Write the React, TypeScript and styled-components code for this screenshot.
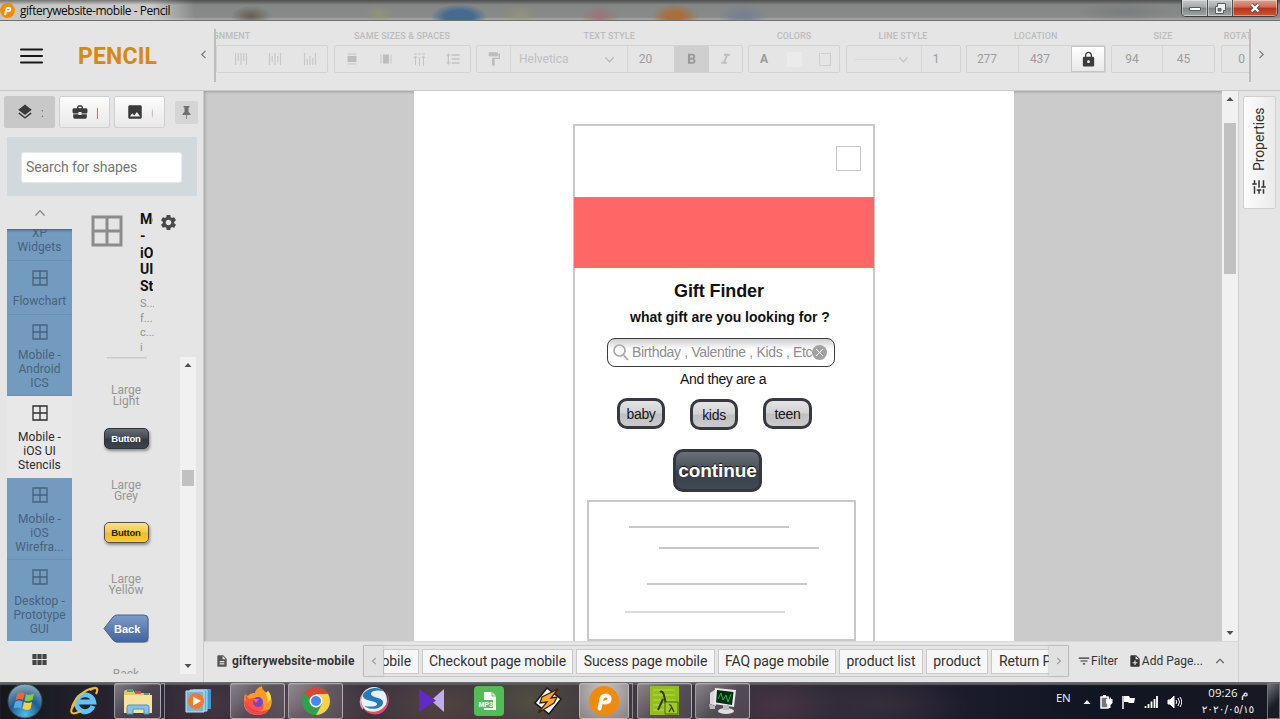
import React from "react";
import styled, { createGlobalStyle, css } from "styled-components";
import {
  MdLayers, MdBusinessCenter, MdImage, MdSettings, MdLock, MdFormatPaint, MdFormatBold,
  MdFormatItalic, MdTune, MdFilterList, MdNoteAdd, MdDescription, MdViewModule, MdFormatLineSpacing,
} from "react-icons/md";

const Global = createGlobalStyle`
  * { box-sizing: border-box; }
  body { margin: 0; overflow: hidden; font-family: Roboto, "Liberation Sans", sans-serif; background: #e5e5e5; }
  svg { display: block; flex: none; }
`;

const Screen = styled.div`
  width: 1280px; height: 719px; display: flex; flex-direction: column; overflow: hidden;
`;

/* Window title bar */
const TitleBar = styled.div`
  height: 21px; flex: none; display: flex; justify-content: space-between; overflow: hidden;
  border-bottom: 1px solid #6d7271;
  background:
    linear-gradient(rgba(60,60,60,.6) 0, transparent 5px),
    linear-gradient(90deg, rgba(205,205,202,.9) 0, rgba(212,212,209,.9) 150px, transparent 195px),
    radial-gradient(ellipse 20px 10px at 251px 16px, rgba(95,84,72,.75) 10%, transparent 100%),
    radial-gradient(ellipse 16px 10px at 379px 14px, rgba(160,155,105,.5) 0%, transparent 100%),
    radial-gradient(ellipse 28px 13px at 459px 17px, rgba(66,104,144,.95) 50%, transparent 100%),
    radial-gradient(ellipse 18px 12px at 520px 15px, rgba(160,155,110,.5) 0%, transparent 100%),
    radial-gradient(ellipse 19px 13px at 600px 17px, rgba(165,108,112,.75) 10%, transparent 100%),
    radial-gradient(ellipse 24px 13px at 675px 17px, rgba(175,105,48,.9) 30%, transparent 100%),
    radial-gradient(ellipse 24px 15px at 743px 18px, rgba(112,124,147,.7) 30%, transparent 100%),
    radial-gradient(ellipse 50px 10px at 1125px 12px, rgba(105,108,108,.4) 0%, transparent 100%),
    linear-gradient(#6c6f6f 0, #838786 4px, #868a89 17px, #a0a4a3 19px);
`;
const Caption = styled.div`
  display: flex; align-items: center; gap: 5px; height: 20px;
  font: 12px "Open Sans", "Noto Sans", sans-serif; color: #0b0b0b; white-space: nowrap; letter-spacing: -0.47px;
`;
const WindowButtons = styled.div`
  display: flex; width: 97px; height: 17px; margin-right: 2px;
  border: 1px solid #3b3f41; border-top: 0; border-radius: 0 0 5px 5px; overflow: hidden;
`;
const WindowButton = styled.div<{ $w: number; $close?: boolean }>`
  width: ${p => p.$w}px; display: grid; place-items: center; border-right: 1px solid #4c5051;
  box-shadow: inset 0 0 0 1px rgba(255,255,255,.4);
  background: ${p => p.$close
    ? "linear-gradient(#dda092 0, #cc6a56 45%, #b83218 50%, #d1532f 100%)"
    : "linear-gradient(#c6c9c9 0, #a5a9a9 45%, #7f8484 50%, #a0a5a5 100%)"};
  &:last-child { border-right: 0; }
`;

/* Header with style toolbar */
const Header = styled.div`
  height: 70px; flex: none; display: flex; background: #e5e5e5; border-bottom: 1px solid #c9c9c9;
`;
const Brand = styled.div`
  width: 214px; flex: none; display: flex; align-items: center; padding: 0 6px 0 20px;
`;
const BrandName = styled.div`
  margin-left: 35px; font-weight: 700; font-size: 23px; color: #d8890f; line-height: 28px; width: 85px; letter-spacing: .15px;
  margin-top: 3px;
`;
const ToolStrip = styled.div`
  width: 1037px; height: 53px; margin-top: 8px; flex: none; overflow: hidden; display: flex; gap: 5.5px; padding-top: 2px;
  border-left: 2px solid #bdbdbd; border-right: 2px solid #bdbdbd;
`;
const Group = styled.div<{ $w: number }>`
  width: ${p => p.$w}px; flex: none;
`;
const GroupLabel = styled.div<{ $shift?: number }>`
  height: 14px; line-height: 10px; font-size: 9px; letter-spacing: .12px; font-weight: 500; color: #bcbcbc; text-align: center; white-space: nowrap;
  transform: translateX(${p => p.$shift ?? 0}px);
`;
const GroupBox = styled.div<{ $end?: boolean }>`
  height: 28px; display: flex; border: 1px solid #d3d3d3; border-radius: 2px;
  justify-content: ${p => (p.$end ? "flex-end" : "flex-start")}; overflow: hidden;
`;
const Cell = styled.div<{ $w: number; $line?: boolean; $active?: boolean; $raised?: boolean; $color?: string; $pull?: number }>`
  width: ${p => p.$w}px; flex: none; display: flex; align-items: center; justify-content: center; padding-right: ${p => p.$pull ?? 0}px;
  font-size: 12px; letter-spacing: 0; color: ${p => p.$color ?? "#9c9c9c"};
  ${p => p.$line && css`border-right: 1px solid #d6d6d6;`}
  ${p => p.$active && css`background: #cfcfcf;`}
  ${p => p.$raised && css`background: linear-gradient(#fff, #e8e8e8); border: 1px solid #c4c4c4;`}
`;
const FontPick = styled(Cell)` justify-content: space-between; padding: 0 13px 0 8px; font-size: 12px; `;
const Swatch = styled.i<{ $hollow?: boolean }>`
  width: ${p => (p.$hollow ? 12 : 15)}px; height: ${p => (p.$hollow ? 13 : 15)}px;
  ${p => (p.$hollow ? css`border: 1px solid #cfcfcf;` : css`background: #ebebeb;`)}
`;
const StrokeSample = styled.i` width: 42px; height: 1px; background: #d8d8d8; `;
const NextArrow = styled.div` flex: 1; display: grid; place-items: center; padding: 0 9px 2px 0; `;
const PrevArrow = styled.div` margin-left: auto; padding-bottom: 2px; `;

/* Work area */
const Work = styled.div` height: 591px; flex: none; display: flex; background: #e5e5e5; `;
const Side = styled.div`
  width: 204px; flex: none; border-right: 1px solid #cbcbcb; display: flex; flex-direction: column; overflow: hidden;
`;
const SideTabs = styled.div` display: flex; padding: 5px 0 0 4px; height: 46px; gap: 4px; `;
const SideTab = styled.div<{ $active?: boolean }>`
  width: 51px; height: 32px; display: flex; align-items: center; gap: 7px; padding-left: 11px; overflow: hidden; border-radius: 2px;
  background: ${p => (p.$active ? "#c8c8c8" : "linear-gradient(#fcfcfc, #e9e9e9)")};
  border: 1px solid ${p => (p.$active ? "#c8c8c8" : "#cfcfcf")}; color: #3a3a3a;
  font-size: 13px;
`;
const TabText = styled.span<{ $w: number; $faint?: boolean }>`
  width: ${p => p.$w}px; overflow: hidden; white-space: nowrap; color: ${p => (p.$faint ? "#bbb" : "#666")};
`;
const Pin = styled.div`
  width: 23px; height: 23px; margin: 5px 0 0 6px; background: #d5d5d5; border-radius: 2px; display: grid; place-items: center; padding: 0 1px 1px 0;
`;
const SearchPane = styled.div` width: 190px; height: 59px; margin-left: 7px; background: #d1d9dc; padding: 15px 14px; flex: none; `;
const SearchInput = styled.div`
  height: 31px; width: 161px; background: #fff; border-radius: 3px; padding-left: 4px; line-height: 28px; font-size: 14px; color: #757575;
  letter-spacing: -.08px; border: 1px solid #e6e9ea;
`;
const Library = styled.div` flex: 1; display: flex; padding: 9px 0 0 7px; min-height: 0; `;
const Collections = styled.div` width: 65px; flex: none; display: flex; flex-direction: column; `;
const CaretRow = styled.div` height: 24px; display: grid; place-items: center; padding-bottom: 8px; `;
const ScrollingItems = styled.div`
  height: 412px; display: flex; flex-direction: column; justify-content: flex-end; overflow: hidden; flex: none;
  box-shadow: inset 0 3px 3px -2px rgba(0,0,0,.45);
  background: #739bc0;
`;
const Collection = styled.div<{ $h: number; $active?: boolean; $lead?: number }>`
  height: ${p => p.$h}px; flex: none; display: flex; flex-direction: column; align-items: center; padding-top: ${p => p.$lead ?? 9}px;
  color: ${p => (p.$active ? "#2c2c2c" : "#48627a")};
  background: ${p => (p.$active ? "#e8e8e8" : "transparent")};
  border-bottom: 1px solid ${p => (p.$active ? "transparent" : "#6890b5")};
  &:last-child { border: 0; }
`;
const CollectionName = styled.div<{ $top?: number }>`
  margin-top: ${p => p.$top ?? 8}px; font-size: 12px; line-height: 14px; text-align: center; letter-spacing: .05px; white-space: pre;
`;
const GridRow = styled.div` height: 36px; display: grid; place-items: center; color: #444; `;
const Shapes = styled.div` width: 125px; display: flex; flex-direction: column; `;
const ShapesHead = styled.div` height: 152px; flex: none; display: flex; align-items: flex-start; padding: 4px 0 0 18px; `;
const ShapesIcon = styled.div` color: #8c8c8c; padding-top: 6px; margin-left: 1px; `;
const ShapesInfo = styled.div` width: 14px; margin: 0 5px 0 17px; overflow: hidden; white-space: pre; `;
const ShapesTitle = styled.div` font-weight: 700; font-size: 14px; line-height: 16.8px; color: #111; margin-top: 2px; width: 13px; overflow: hidden; `;
const ShapesNote = styled.div` font-size: 11px; line-height: 14.7px; color: #909090; margin-top: 2px; `;
const Gear = styled.div` margin-top: 4px; color: #484848; `;
const ShapesBody = styled.div` display: flex; height: 317px; overflow: hidden; `;
const ShapeList = styled.div` width: 108px; flex: none; display: flex; flex-direction: column; align-items: center; overflow: hidden; `;
const CutEdge = styled.div` width: 40px; height: 2px; background: linear-gradient(#c4c4c4, #e0e0e0); margin: 0 0 26px 2px; flex: none; `;
const ShapeName = styled.div`
  font-size: 12px; line-height: 11px; height: 24px; text-align: center; color: #969696; white-space: pre; letter-spacing: 0; flex: none;
`;
const MiniSlot = styled.div` height: 70.6px; flex: none; display: flex; align-items: center; justify-content: center; padding-bottom: 12px; `;
const MiniButton = styled.div<{ $yellow?: boolean }>`
  width: 45px; height: 21px; border-radius: 5px; display: grid; place-items: center;
  font: bold 9.5px "Liberation Sans", Arial, sans-serif; letter-spacing: -.2px; box-shadow: 1px 2px 3px rgba(0,0,0,.4);
  ${p => (p.$yellow
    ? css`border: 1.5px solid #55524c; color: #2a2206; background: linear-gradient(#f9e08a, #f5cb45 48%, #efbc23 52%, #f5cc40);`
    : css`border: 1.5px solid #2e343c; color: #fff; background: linear-gradient(#666c74, #434a54 48%, #323943 52%, #3d444e);`)}
`;

const ScrollTrack = styled.div`
  width: 16px; flex: none; background: #f1f1f1; display: flex; flex-direction: column; align-items: center; padding: 5px 0;
`;
const Thumb = styled.div<{ $top: number; $h: number }>`
  width: 12px; height: ${p => p.$h}px; margin-top: ${p => p.$top}px; margin-bottom: auto; background: #c1c1c1; flex: none;
`;

const Center = styled.div` width: 1034px; flex: none; display: flex; flex-direction: column; `;
const CanvasRow = styled.div` height: 550px; display: flex; `;
const Canvas = styled.div`
  width: 1018px; background: #cbcbcb; overflow: hidden; display: flex; padding-left: 210px;
  box-shadow: inset 2px 2px 3px -1px rgba(0,0,0,.22);
`;
const Page = styled.div` width: 600px; height: 550px; background: #fff; position: relative; overflow: hidden; `;

/* Shapes placed on the drawing page */
type Box = { $x: number; $y: number; $w: number; $h: number };
const Shape = styled.div<Box>`
  position: absolute; left: ${p => p.$x}px; top: ${p => p.$y}px; width: ${p => p.$w}px; height: ${p => p.$h}px;
`;
const Outline = styled(Shape)<{ $thin?: boolean }>` border: ${p => (p.$thin ? 1 : 2)}px solid #c8c8c8; `;
const Banner = styled(Shape)` background: #ff6767; border: 1px solid #e07a7a; border-width: 1px 0; `;
const Rule = styled(Shape)<{ $light?: boolean }>` background: ${p => (p.$light ? "#dcdcdc" : "#c8c8c8")}; `;
const PageText = styled(Shape)<{ $size: number; $bold?: boolean; $gap?: number }>`
  font: ${p => (p.$bold ? "bold" : "normal")} ${p => p.$size}px/${p => p.$h}px "Liberation Sans", Arial, sans-serif;
  letter-spacing: ${p => p.$gap ?? 0}px; color: #111; white-space: nowrap;
`;
const SearchField = styled(Shape)`
  border: 1px solid #3c3c3c; border-radius: 8px; display: flex; align-items: center; padding: 0 6px 1px 5px;
  background: linear-gradient(#cfcfd1, #fff 40%); color: #8d8d8d; font: 14px "Liberation Sans", Arial, sans-serif; letter-spacing: -.33px;
`;
const FieldText = styled.span` width: 188px; margin: 0 -8px 0 3px; white-space: nowrap; `;
const Pill = styled(Shape)`
  border: 3px solid #38393f; border-radius: 10px; display: grid; place-items: center; color: #151515;
  font: 14px "Liberation Sans", Arial, sans-serif; letter-spacing: -.3px; padding-top: 1px;
  background: linear-gradient(#e4e4e6, #d2d2d5 48%, #c0c0c4 52%, #cbcbce);
`;
const BigButton = styled(Shape)`
  border: 3px solid #34373d; border-radius: 10px; display: grid; place-items: center; color: #fff;
  font: bold 19px "Liberation Sans", Arial, sans-serif; text-shadow: 0 -1px 1px #111; letter-spacing: -.1px;
  background: linear-gradient(#6a6f77, #4a5059 48%, #363e48 52%, #414954);
`;

/* Bottom page bar */
const PageBar = styled.div` height: 41px; display: flex; align-items: center; border-top: 1px solid #d8d8d8; background: #e5e5e5; padding-bottom: 2px; `;
const DocName = styled.div`
  width: 159px; flex: none; display: flex; align-items: center; gap: 3px; padding-left: 11px; font-weight: 700; font-size: 12px; color: #333;
  letter-spacing: .18px; white-space: nowrap;
`;
const PageTabs = styled.div` width: 706px; height: 32px; flex: none; display: flex; border: 1px solid #c6c6c6; `;
const TabArrow = styled.div` width: 19px; flex: none; display: grid; place-items: center; background: #e1e1e1; box-shadow: 0 0 2px #aaa; z-index: 1; `;
const TabClip = styled.div` flex: 1; overflow: hidden; display: flex; gap: 3px; padding: 3px 0; background: #e5e5e5; `;
const PageTab = styled.div<{ $w: number; $cut?: boolean; $open?: boolean }>`
  width: ${p => p.$w}px; flex: none; height: 25px; border: 1px solid #c9c9c9; background: #f7f7f7; font-size: 14px; color: #333;
  display: flex; align-items: center; overflow: hidden; white-space: nowrap; letter-spacing: -.1px;
  justify-content: ${p => (p.$cut ? "flex-end" : p.$open ? "flex-start" : "center")};
  padding: 0 7px 1px;
`;
const BarAction = styled.div<{ $left: number; $gap: number }>`
  display: flex; align-items: center; gap: ${p => p.$gap}px; margin-left: ${p => p.$left}px; font-size: 12px; color: #333; white-space: nowrap;
`;

const Right = styled.div` width: 42px; border-left: 1px solid #d0d0d0; padding: 5px 0 0 4px; `;
const PropertiesTab = styled.div`
  width: 33px; height: 113px; border: 1px solid #d0d0d0; border-radius: 2px;
  writing-mode: vertical-rl; transform: rotate(180deg); display: flex; align-items: center; gap: 7px; padding: 12px 0 0 1px;
  font-size: 14px; letter-spacing: -.1px; color: #333; background: linear-gradient(270deg, #fdfdfd, #eaeaea);
`;
const TurnedTune = styled(MdTune)` transform: rotate(90deg); `;

/* Taskbar */
const Taskbar = styled.div`
  height: 37px; flex: none; display: flex; border-top: 1px solid #6c6d70; overflow: hidden;
  box-shadow: inset 0 2px 1px #5b5c60;
  background:
    radial-gradient(ellipse 60px 40px at 310px 20px, rgba(99,82,88,.8), transparent),
    radial-gradient(ellipse 70px 34px at 440px 22px, rgba(82,68,64,.9), transparent),
    radial-gradient(ellipse 60px 40px at 530px 18px, rgba(82,80,66,.9), transparent),
    radial-gradient(ellipse 60px 30px at 780px 22px, rgba(72,54,66,.9), transparent),
    radial-gradient(ellipse 90px 30px at 880px 22px, rgba(58,48,62,.8), transparent),
    radial-gradient(ellipse 60px 40px at 210px 20px, rgba(70,56,68,.8), transparent),
    linear-gradient(90deg, #15171d 0, #282431 120px, #3c3340 300px, #423b40 600px, #302b3a 800px, #1b1b2c 960px, #101522 1100px, #171922 1280px);
`;
const Task = styled.div<{ $w: number; $left?: number; $open?: boolean; $active?: boolean }>`
  width: ${p => p.$w}px; margin-left: ${p => p.$left ?? 0}px; height: 36px; flex: none; display: grid; place-items: center; padding-bottom: 1px;
  ${p => p.$open && css`
    border: 1px solid rgba(205,205,205,.65); border-radius: 3px;
    background: linear-gradient(135deg, rgba(215,210,215,.5), rgba(170,160,170,.25) 50%, rgba(120,110,120,.3));
  `}
  ${p => p.$active && css`background: radial-gradient(circle at 50% 20%, rgba(225,220,218,.85), rgba(160,155,155,.75));`}
`;
const StackEdge = styled.div`
  width: 4px; height: 36px; flex: none; border: solid rgba(190,190,190,.6); border-width: 1px 1px 1px 0;
`;
const Tray = styled.div`
  margin-left: auto; display: flex; align-items: center; color: #f2f2f2; font: 12px "Open Sans", "Noto Sans", sans-serif; height: 36px;
`;
const Lang = styled.div` width: 27px; font-size: 11.5px; letter-spacing: -.4px; margin-top: -7px; `;
const TrayIcons = styled.div` display: flex; align-items: center; width: 99px; justify-content: space-between; padding-top: 1px; `;
const Clock = styled.div` width: 60px; margin-left: 16px; text-align: center; line-height: 16px; font-size: 11.5px; letter-spacing: -.75px; `;
const ClockDate = styled.div` font: 10.6px/16px "DejaVu Sans", "Noto Sans", sans-serif; letter-spacing: 0; white-space: nowrap; direction: ltr; unicode-bidi: bidi-override; `;
const PeekButton = styled.div`
  width: 13px; height: 36px; margin-left: 9px; border: 1px solid #71757c; background: linear-gradient(135deg, #72767c, #1a1d24 60%);
`;

const Quad = ({ s, w = 1.6 }: { s: number; w?: number }) => (
  <svg width={s} height={s} viewBox="0 0 16 16" fill="none" stroke="currentColor" strokeWidth={w}>
    <path d="M1 1h14v14H1zM8 1v14M1 8h14" />
  </svg>
);
const Chevron = ({ d, c = "#777", s = 8 }: { d: "l" | "r" | "u" | "d"; c?: string; s?: number }) => (
  <svg width={s} height={s} viewBox="0 0 8 8" fill="none" stroke={c} strokeWidth="1.1">
    <path d={{ l: "M5.8 .8 2.5 4l3.3 3.2", r: "M2.2 .8 5.5 4 2.2 7.2", u: "M.3 6 4 2.2 7.7 6", d: "M.3 2.2 4 6l3.7-3.8" }[d]} />
  </svg>
);
const Triangle = ({ down, c = "#505050" }: { down?: boolean; c?: string }) => (
  <svg width="8" height="6" viewBox="0 0 8 6"><path fill={c} d={down ? "M.5 1h7L4 5z" : "M.5 5h7L4 1z"} /></svg>
);
const VBars = ({ mode }: { mode: number }) => (
  <svg width="14" height="14" viewBox="0 0 14 14" stroke="#c8c8c8" strokeWidth="1.2">
    {[0, 1, 2, 3, 4].map(i => {
      const tall = i === 0 || i === 4 || i === 2;
      const y1 = mode === 0 ? 1 : mode === 1 ? (i % 2 ? 4 : 1) : [1, 7, 4, 6, 1][i];
      const y2 = mode === 0 ? (tall ? 13 : 9) : mode === 1 ? (i % 2 ? 10 : 13) : 13;
      return <path key={i} d={`M${1.5 + i * 2.75} ${y1}V${y2}`} />;
    })}
  </svg>
);
const SizeBars = ({ turn }: { turn?: boolean }) => (
  <svg width="12" height="12" viewBox="0 0 12 12">
    <g transform={turn ? "rotate(90 6 6)" : undefined}>
      <path d="M1.500 1h9M1.500 11h9" stroke="#c4c4c4" /><path d="M1.500 3h9v6h-9z" fill="#bdbdbd" />
    </g>
  </svg>
);
const PencilLogo = ({ s }: { s: number }) => (
  <svg width={s} height={s} viewBox="0 0 30 30">
    <circle cx="15" cy="15" r="15" fill="#ef8b09" />
    <path d="M10.500 22.500 12 16c0-3 1-6.500 5-6.500 5 0 5 7-1.500 7" fill="none" stroke="#fff" strokeWidth="4" strokeLinecap="round" strokeLinejoin="round" />
  </svg>
);

const PAGES: { n: string; w: number; cut?: boolean; open?: boolean }[] = [
  { n: "obile", w: 36, cut: true }, { n: "Checkout page mobile", w: 151 }, { n: "Sucess page mobile", w: 139 },
  { n: "FAQ page mobile", w: 118 }, { n: "product list", w: 84 }, { n: "product", w: 62 }, { n: "Return Policy", w: 100, open: true },
];
const COLLECTIONS = [
  { n: "Flowchart", h: 54 }, { n: "Mobile -\nAndroid\nICS", h: 81 }, { n: "Mobile -\niOS UI\nStencils", h: 82, on: true, top: 9 },
  { n: "Mobile -\niOS\nWirefra...", h: 82, top: 9 }, { n: "Desktop -\nPrototype\nGUI", h: 81, top: 9 },
];

const StyleToolbar = () => (
  <ToolStrip>
    <Group $w={112}>
      <GroupLabel $shift={-47.5}>ALIGNMENT</GroupLabel>
      <GroupBox $end>{[0, 1, 2].map(m => <Cell key={m} $w={34.5}><VBars mode={m} /></Cell>)}</GroupBox>
    </Group>
    <Group $w={137}>
      <GroupLabel>SAME SIZES &amp; SPACES</GroupLabel>
      <GroupBox>
        <Cell $w={34}><SizeBars /></Cell>
        <Cell $w={34}><SizeBars turn /></Cell>
        <Cell $w={34}>
          <svg width="13" height="15" viewBox="0 0 13 15" stroke="#c4c4c4" fill="none"><path d="M1 2h3M5 2h3M9 2h3M2.500 5v8M6.500 5v9M10.500 5v9M1 6l1.500-2L4 6M9 6l1.500-2L12 6" /></svg>
        </Cell>
        <Cell $w={33} $color="#c2c2c2"><MdFormatLineSpacing size={16} /></Cell>
      </GroupBox>
    </Group>
    <Group $w={266.5}>
      <GroupLabel>TEXT STYLE</GroupLabel>
      <GroupBox>
        <Cell $w={34} $line $color="#bdbdbd"><MdFormatPaint size={16} /></Cell>
        <FontPick $w={116.500} $line $color="#c0c0c0">Helvetica<Chevron d="d" c="#b8b8b8" s={9} /></FontPick>
        <Cell $w={46} $pull={10}>20</Cell>
        <Cell $w={35} $active $color="#999"><MdFormatBold size={17} /></Cell>
        <Cell $w={34} $color="#c0c0c0"><MdFormatItalic size={17} /></Cell>
      </GroupBox>
    </Group>
    <Group $w={92}>
      <GroupLabel>COLORS</GroupLabel>
      <GroupBox>
        <Cell $w={30} $color="#999"><b>A</b></Cell>
        <Cell $w={31}><Swatch /></Cell>
        <Cell $w={29}><Swatch $hollow /></Cell>
      </GroupBox>
    </Group>
    <Group $w={115}>
      <GroupLabel>LINE STYLE</GroupLabel>
      <GroupBox>
        <FontPick $w={75} $line><StrokeSample /><Chevron d="d" c="#c4c4c4" s={9} /></FontPick>
        <Cell $w={29}>1</Cell>
      </GroupBox>
    </Group>
    <Group $w={139.5}>
      <GroupLabel>LOCATION</GroupLabel>
      <GroupBox>
        <Cell $w={52} $line $pull={11}>277</Cell>
        <Cell $w={52} $pull={10}>437</Cell>
        <Cell $w={34} $raised $color="#3c3c3c"><MdLock size={17} /></Cell>
      </GroupBox>
    </Group>
    <Group $w={104}>
      <GroupLabel>SIZE</GroupLabel>
      <GroupBox>
        <Cell $w={51} $line $pull={10}>94</Cell>
        <Cell $w={51} $pull={10}>45</Cell>
      </GroupBox>
    </Group>
    <Group $w={56}>
      <GroupLabel $shift={-3}>ROTATION</GroupLabel>
      <GroupBox><Cell $w={40}>0</Cell></GroupBox>
    </Group>
  </ToolStrip>
);

const Drawing = () => (
  <Page>
    <Outline $x={159} $y={33} $w={302} $h={620} />
    <Outline $thin $x={422} $y={55} $w={25} $h={25} />
    <Banner $x={160} $y={106} $w={300} $h={71} />
    <PageText $bold $size={18} $gap={-0.1} $x={260} $y={190} $w={110} $h={21}>Gift Finder</PageText>
    <PageText $bold $size={14} $x={216} $y={217} $w={210} $h={18}>what gift are you looking for ?</PageText>
    <SearchField $x={193} $y={247} $w={228} $h={29}>
      <svg width="16" height="17" viewBox="0 0 16 17" fill="none" stroke="#a9a9a9" strokeWidth="1.700"><circle cx="6.500" cy="6.500" r="5.500" /><path d="m10.500 11 4.500 5" /></svg>
      <FieldText>Birthday , Valentine , Kids , Etc</FieldText>
      <svg width="15" height="15" viewBox="0 0 15 15"><circle cx="7.500" cy="7.500" r="7.500" fill="#a3a3a3" /><path d="m4 4 7 7m0-7-7 7" stroke="#fff" strokeWidth="1" /></svg>
    </SearchField>
    <PageText $size={14} $gap={-0.35} $x={266} $y={279} $w={110} $h={18}>And they are a</PageText>
    <Pill $x={203} $y={307} $w={48} $h={31}>baby</Pill>
    <Pill $x={276} $y={308} $w={48} $h={31}>kids</Pill>
    <Pill $x={349} $y={307} $w={49} $h={31}>teen</Pill>
    <BigButton $x={259} $y={358} $w={89} $h={43}>continue</BigButton>
    <Outline $x={173} $y={409} $w={269} $h={141} />
    <Rule $x={215} $y={435} $w={160} $h={2} />
    <Rule $x={245} $y={456} $w={160} $h={2} />
    <Rule $x={233} $y={492} $w={160} $h={2} />
    <Rule $light $x={211} $y={520} $w={160} $h={2} />
  </Page>
);

const Tasks = () => (
  <>
    <Task $w={50}>
      <svg width="36" height="36" viewBox="0 0 36 36">
        <defs><radialGradient id="orb" cx=".5" cy=".9" r=".9"><stop offset="0" stopColor="#4cc0e8" /><stop offset=".5" stopColor="#1d5c93" /><stop offset="1" stopColor="#93aebb" /></radialGradient></defs>
        <circle cx="18" cy="18" r="17" fill="url(#orb)" stroke="#33475a" />
        <path d="M10 11q4-3 7.500-.5L16 17q-4-2-7.500.500z" fill="#f0662c" /><path d="M19 11q3 2 8-.500L25.500 17q-4 2-8 .500z" fill="#8cc63f" />
        <path d="M8 19q4-2.500 7.500-.500L14 25.500q-3-2-7.500 0z" fill="#5aa7e4" /><path d="M17 19q4 2 8 0l-1.500 7q-4 2-8-.500z" fill="#fcd03a" />
      </svg>
    </Task>
    <Task $w={36} $left={16}>
      <svg width="32" height="32" viewBox="0 0 32 32" fill="none">
        <path d="M25 21a8.500 8.500 0 0 1-16.500-3.500a8.700 8.700 0 0 1 17.200-.5H10" stroke="#5ec4f3" strokeWidth="5" />
        <path d="M22 5c6-4 9-2 6 4M7 18C0 28 3 31 13 26M4 22C7 13 17 4 26 3" stroke="#f3bd2a" strokeWidth="2.200" />
      </svg>
    </Task>
    <Task $w={47} $left={12} $open>
      <svg width="30" height="30" viewBox="0 0 30 30">
        <path d="M1 6q0-2 2-2h7l2 3h15v19H1z" fill="#e2c66d" /><path d="M4 3h6v3H4zM12 5h6v3h-6zM21 7h5v3h-5z" fill="#4da653" />
        <path d="M12 5h6v2h-6z" fill="#c85637" /><path d="M1 9h28v18H1z" fill="#f7e3a0" />
        <path d="M6 19h18q2 0 2 2v7h-5v-5H10v5H4v-7q0-2 2-2z" fill="#84c3e6" stroke="#4f93bc" />
      </svg>
    </Task>
    <StackEdge />
    <Task $w={48} $left={9}>
      <svg width="27" height="26" viewBox="0 0 27 26">
        <path d="M8 1h18v20H8z" fill="#4397c9" /><path d="M5 2h17v21H5z" fill="#62b3dd" stroke="#b2def2" /><path d="M1 3h18v21H1z" fill="#77b6d6" stroke="#c7e6f3" />
        <circle cx="11" cy="13" r="8" fill="#f07a28" /><path d="m8 8.500 8 4.500-8 4.500z" fill="#fff" />
      </svg>
    </Task>
    <Task $w={55} $left={8} $open>
      <svg width="30" height="30" viewBox="0 0 30 30">
        <path d="M2 8l3 2c2-3 5-3 7-3 0-3 4-6 7-7 0 4 3 5 4 7l2-2c3 5 5 9 3 15-3 7-8 9-13 9C6 29 1 24 1 17c0-4 0-6 1-9z" fill="#ff9a24" />
        <path d="M2 8l4 5 5-1 4 3-4 3c3 4 8 2 9-1 2 5-1 9-6 9C8 26 3 21 2 8z" fill="#fb5638" /><path d="M1.500 13C0 25 8 29 15 29c5 0 9-3 11-6-10 5-19 2-24.500-10z" fill="#ee2d66" opacity=".8" />
        <path d="M19 0c0 4 3 5 4 8s2 5 1 9c5-3 5-8 1-12l-2 2c-1-2-4-3-4-7z" fill="#ffe14a" /><circle cx="15" cy="16" r="5" fill="#7542d5" /><path d="M10 13l6 0-3 4z" fill="#ff6c3b" />
      </svg>
    </Task>
    <Task $w={55} $left={3} $open>
      <svg width="28" height="28" viewBox="0 0 28 28">
        <circle cx="14" cy="14" r="14" fill="#2da14e" /><path d="M14 14 1.900 7A14 14 0 0 1 26.100 7z" fill="#db4437" /><path d="M14 28A14 14 0 0 0 26.100 7H14l6 10z" fill="#fdd049" />
        <circle cx="14" cy="14" r="6.500" fill="#fff" /><circle cx="14" cy="14" r="5" fill="#4587f0" />
      </svg>
    </Task>
    <Task $w={34} $left={14}>
      <svg width="31" height="30" viewBox="0 0 31 30">
        <circle cx="15" cy="14" r="13" fill="#eaf1f6" />
        <path d="M4 8C9 1 20 0 25 5c-6-1-13-1-13 3 0 4 13 3 12 9-1 6-12 8-19 3 6 1 13 1 13-2 0-4-16-2-14-10z" fill="#2579bd" />
        <path d="M26 3c4 5 4 13-1 18-6 6-14 6-20 2 4 6 15 8 21 1 5-6 5-15 0-21z" fill="#e54b6c" />
        <path d="M4 8C0 13 1 19 4 23" fill="none" stroke="#e9a3b4" strokeWidth="1.500" />
      </svg>
    </Task>
    <Task $w={34} $left={23}>
      <svg width="27" height="23" viewBox="0 0 27 23"><path d="M26 0v23L13 11.500z" fill="#c3abf1" /><path d="M1 0v23l17-11.500z" fill="#6029c9" /></svg>
    </Task>
    <Task $w={34} $left={24}>
      <svg width="30" height="30" viewBox="0 0 30 30">
        <rect width="30" height="30" rx="4" fill="#52bd57" /><path d="M10 6h8l4 4v14H10z" fill="#fff" />
        <path d="M18 6v4h4" fill="none" stroke="#52bd57" />
        <rect x="4" y="14" width="15" height="8" fill="#52bd57" />
        <text x="4.500" y="21" fontFamily="Liberation Sans" fontWeight="700" fontSize="7" fill="#fff">MP3</text>
      </svg>
    </Task>
    <Task $w={34} $left={25}>
      <svg width="28" height="28" viewBox="0 0 28 28">
        <path d="m13 1 14 11-12 15L1 16z" fill="#f5f5f5" stroke="#181818" strokeWidth="1.500" /><path d="M24 2 8 10l-2 6 7-1-9 11 16-10 3-6-6 1z" fill="#ffa72b" stroke="#3c2408" strokeWidth="1.300" />
      </svg>
    </Task>
    <Task $w={50} $left={14} $open $active><PencilLogo s={30} /></Task>
    <StackEdge />
    <Task $w={55} $left={4} $open>
      <svg width="29" height="29" viewBox="0 0 29 29">
        <path d="M0 0h29v29H0z" fill="#93bf1b" /><path d="M3 4h22M3 9h22M3 14h22M3 19h12M3 24h12" stroke="#bad953" />
        <path d="M10 6c4-2 4 4 7 17M13 13 8 24" fill="none" stroke="#303914" strokeWidth="2" /><path d="M15 16h13v12H15z" fill="#9fca28" stroke="#4d6413" />
        <path d="M19 19c2-1 2 1 5 7M21.500 21.500 19 26" fill="none" stroke="#303914" strokeWidth="1.200" />
      </svg>
    </Task>
    <Task $w={55} $left={3} $open>
      <svg width="30" height="28" viewBox="0 0 30 28">
        <path d="M2 6 8 2v17l-6-2z" fill="#dadada" /><path d="m7 1 21 2-2 17L6 17z" fill="#ececec" /><path d="m9 3 16.500 2-1.500 13L8 15.500z" fill="#062d12" />
        <path d="M10 12l3-6 2 7 3-5 2 7 3-8" stroke="#23b64b" fill="none" /><ellipse cx="18" cy="24" rx="8" ry="3" fill="#dfdfdf" /><path d="M15 18h6v5h-6zM1 17l6 2v3H2z" fill="#bbb" />
      </svg>
    </Task>
  </>
);

export default function App() {
  return (
    <Screen>
      <Global />
      <TitleBar>
        <Caption><PencilLogo s={15} />gifterywebsite-mobile - Pencil</Caption>
        <WindowButtons>
          <WindowButton $w={26}><svg width="12" height="8" viewBox="0 0 12 8"><path d="M.5 3.500h11v3H.5z" fill="#fff" stroke="#555e64" /></svg></WindowButton>
          <WindowButton $w={25}><svg width="12" height="11" viewBox="0 0 12 11"><path d="M3.500.5h8v7h-2v3h-8v-7h2z" fill="#eee" stroke="#555e64" /><path d="M4 5.500h3v2.500H4z" fill="#7c8284" stroke="#555e64" /></svg></WindowButton>
          <WindowButton $w={44} $close><svg width="12" height="10" viewBox="0 0 12 10"><path d="m2.500 1.500 7 7m0-7-7 7" stroke="#684b4b" strokeWidth="4" /><path d="m2.500 1.500 7 7m0-7-7 7" stroke="#fff" strokeWidth="2.300" /></svg></WindowButton>
        </WindowButtons>
      </TitleBar>

      <Header>
        <Brand>
          <svg width="23" height="16" viewBox="0 0 23 16" stroke="#181818" strokeWidth="2" strokeLinecap="round"><path d="M1 1.500h21M1 8h21M1 14.500h21" /></svg>
          <BrandName>PENCIL</BrandName>
          <PrevArrow><Chevron d="l" s={9} /></PrevArrow>
        </Brand>
        <StyleToolbar />
        <NextArrow><Chevron d="r" s={9} /></NextArrow>
      </Header>

      <Work>
        <Side>
          <SideTabs>
            <SideTab $active><MdLayers size={18} /><TabText $w={2}>:</TabText></SideTab>
            <SideTab><MdBusinessCenter size={18} /><TabText $w={2}>|</TabText></SideTab>
            <SideTab><MdImage size={18} /><TabText $w={2} $faint>(</TabText></SideTab>
            <Pin><svg width="9" height="13" viewBox="0 0 9 13"><path d="M1.500 0h6v1.300l-1 .5v4L8.500 8v1H.5V8l2-2.200v-4l-1-.5z" fill="#707070" /><path d="M4.500 9v4" stroke="#888" /></svg></Pin>
          </SideTabs>
          <SearchPane><SearchInput>Search for shapes</SearchInput></SearchPane>
          <Library>
            <Collections>
              <CaretRow><Chevron d="u" s={10} c="#888" /></CaretRow>
              <ScrollingItems>
                <Collection $h={54} $lead={11}><CollectionName>{"XP\nWidgets"}</CollectionName></Collection>
                {COLLECTIONS.map(c => (
                  <Collection key={c.n} $h={c.h} $active={c.on}><Quad s={16} w={1.300} /><CollectionName $top={c.top}>{c.n}</CollectionName></Collection>
                ))}
              </ScrollingItems>
              <GridRow><MdViewModule size={19} /></GridRow>
            </Collections>
            <Shapes>
              <ShapesHead>
                <ShapesIcon><Quad s={32} w={1.500} /></ShapesIcon>
                <ShapesInfo>
                  <ShapesTitle>{"Mo\n-\niOS\nUI\nSte"}</ShapesTitle>
                  <ShapesNote>{"S...\nf...\nc...\ni"}</ShapesNote>
                </ShapesInfo>
                <Gear><MdSettings size={19} /></Gear>
              </ShapesHead>
              <ShapesBody>
                <ShapeList>
                  <CutEdge />
                  <ShapeName>{"Large\nLight"}</ShapeName>
                  <MiniSlot><MiniButton>Button</MiniButton></MiniSlot>
                  <ShapeName>{"Large\nGrey"}</ShapeName>
                  <MiniSlot><MiniButton $yellow>Button</MiniButton></MiniSlot>
                  <ShapeName>{"Large\nYellow"}</ShapeName>
                  <MiniSlot>
                    <svg width="48" height="34" viewBox="0 0 48 34">
                      <defs><linearGradient id="bk" x2="0" y2="1"><stop offset="0" stopColor="#7e9bc8" /><stop offset="1" stopColor="#41649c" /></linearGradient></defs>
                      <path d="M3 20 12 8q2-2 4-2h27q4 0 4 4v20q0 3-4 3H16q-2 0-4-2z" fill="#999" opacity=".6" />
                      <path d="M2 18.500 11 7q2-2 4-2h27q4 0 4 4v19q0 4-4 4H15q-2 0-4-2z" fill="url(#bk)" stroke="#48628c" />
                      <text x="12" y="23" fontFamily="Liberation Sans" fontWeight="700" fontSize="11" fill="#fff">Back</text>
                    </svg>
                  </MiniSlot>
                  <ShapeName>Back</ShapeName>
                </ShapeList>
                <ScrollTrack><Triangle /><Thumb $top={102} $h={16} /><Triangle down /></ScrollTrack>
              </ShapesBody>
            </Shapes>
          </Library>
        </Side>

        <Center>
          <CanvasRow>
            <Canvas><Drawing /></Canvas>
            <ScrollTrack><Triangle /><Thumb $top={21} $h={151} /><Triangle down /></ScrollTrack>
          </CanvasRow>
          <PageBar>
            <DocName><MdDescription size={14} color="#555" />gifterywebsite-mobile</DocName>
            <PageTabs>
              <TabArrow><Chevron d="l" c="#999" /></TabArrow>
              <TabClip>{PAGES.map(p => <PageTab key={p.n} $w={p.w} $cut={p.cut} $open={p.open}>{p.n}</PageTab>)}</TabClip>
              <TabArrow><Chevron d="r" c="#999" /></TabArrow>
            </PageTabs>
            <BarAction $left={8} $gap={-1}><MdFilterList size={14} />Filter</BarAction>
            <BarAction $left={10} $gap={0}><MdNoteAdd size={14} />Add Page...</BarAction>
            <BarAction $left={13} $gap={0}><Chevron d="u" c="#555" /></BarAction>
          </PageBar>
        </Center>

        <Right><PropertiesTab><TurnedTune size={18} />Properties</PropertiesTab></Right>
      </Work>

      <Taskbar>
        <Tasks />
        <Tray>
          <Lang>EN</Lang>
          <TrayIcons>
            <Triangle c="#f0f0f0" />
            <svg width="13" height="14" viewBox="0 0 13 14"><path d="M1 2h7v11H1z" fill="#777" stroke="#fff" strokeWidth="1.500" /><path d="M3 0h3v2H3zM6 4h1.500V2.500h1.200V4h1V2.500H11V4h1.500v4l-2 2v3H8v-3L6 8z" fill="#fff" /></svg>
            <svg width="14" height="14" viewBox="0 0 14 14"><path d="M1 1v13" stroke="#fff" strokeWidth="1.500" /><path d="M2 1h5l1 2h5l-1 5H7L6 7H2z" fill="#fff" /></svg>
            <svg width="14" height="12" viewBox="0 0 14 12"><path d="M1.500 12v-2M4.500 12V8M7.500 12V5.500M10.500 12V3M13 12V0" stroke="#fff" strokeWidth="1.800" /></svg>
            <svg width="15" height="14" viewBox="0 0 15 14" fill="none" stroke="#fff"><path d="M1 5h2l4-4v12L3 9H1z" fill="#fff" /><path d="M9 5q1.500 2 0 4M11 3q3 4 0 8M13 2q3.500 5 0 10" /></svg>
          </TrayIcons>
          <Clock>09:26 م<ClockDate>٢٠٢٠/٠٥/١٥</ClockDate></Clock>
          <PeekButton />
        </Tray>
      </Taskbar>
    </Screen>
  );
}
